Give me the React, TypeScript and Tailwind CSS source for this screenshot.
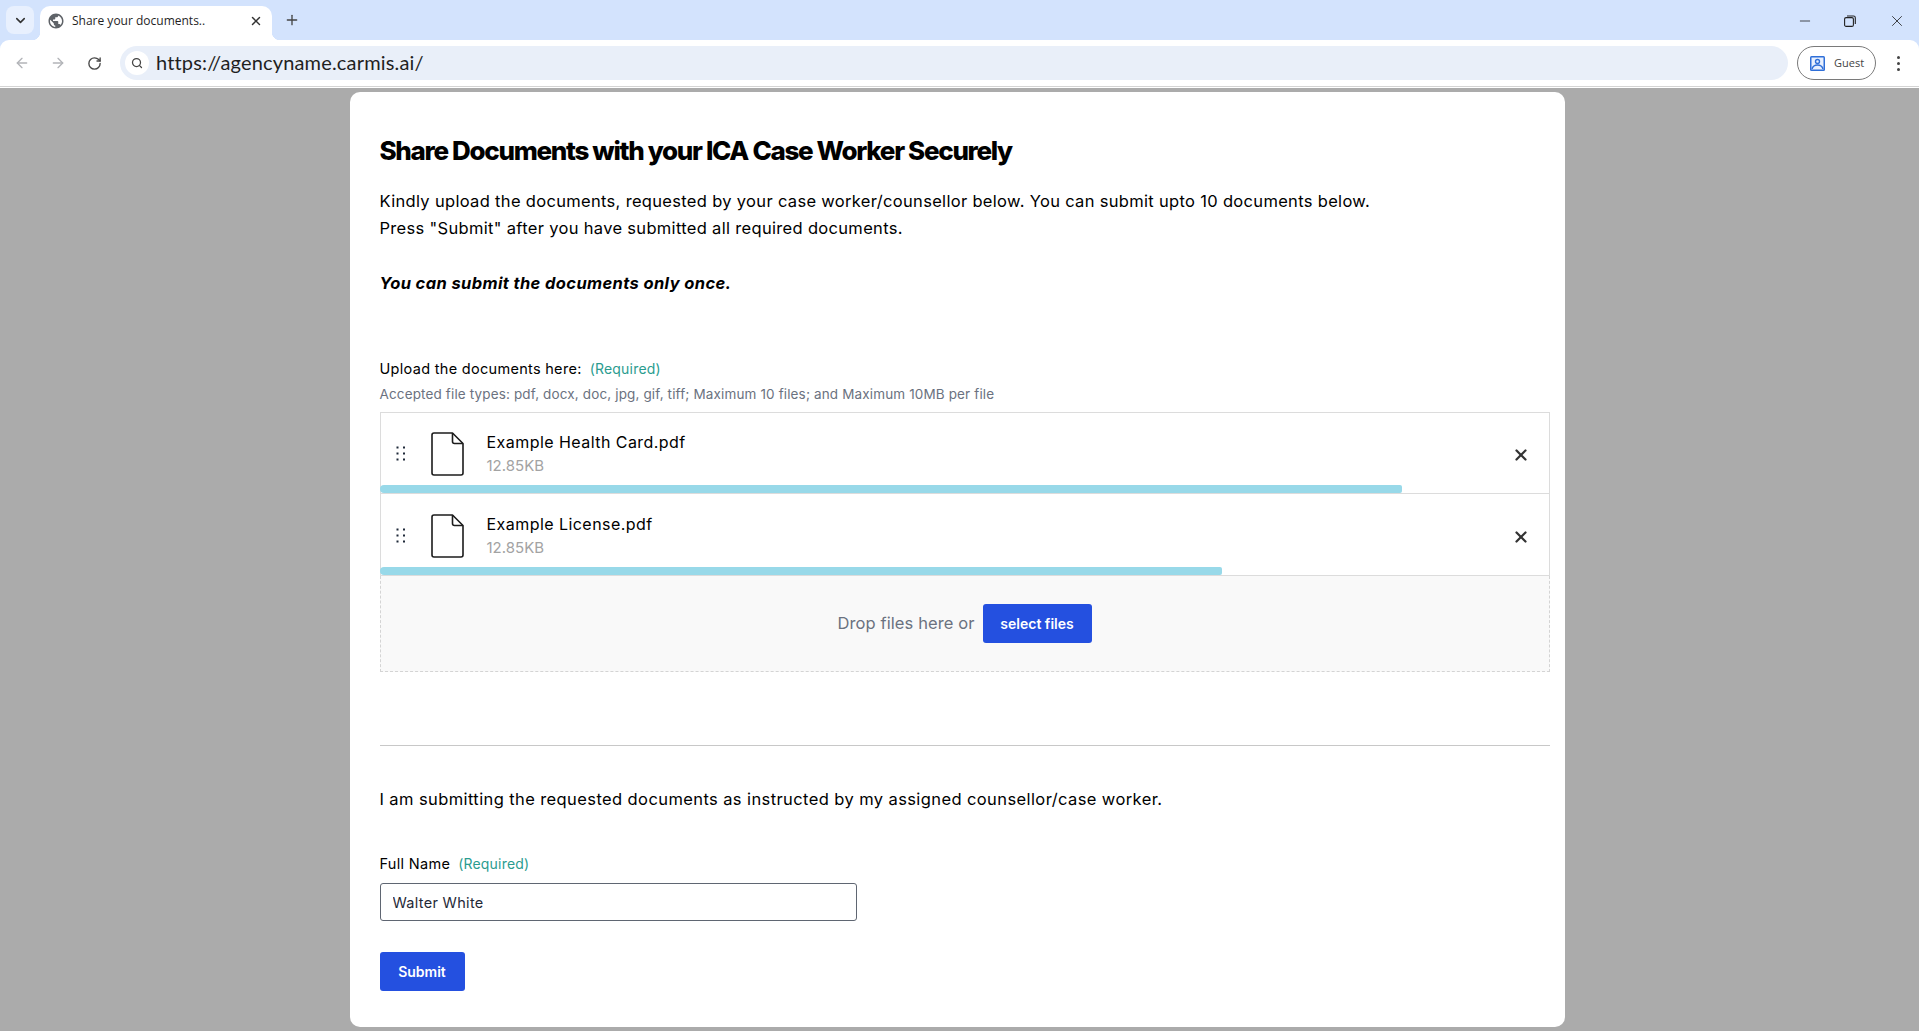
import { ArrowLeft, ArrowRight, ChevronDown, Minus, Plus, RotateCw, Search, X } from "lucide-react";
import { MdPublic } from "react-icons/md";

const FILES = [
  { name: "Example Health Card.pdf", size: "12.85KB", progress: 1022 },
  { name: "Example License.pdf", size: "12.85KB", progress: 842 },
];

function DragDots() {
  return (
    <svg width="10" height="15" viewBox="0 0 10 15" className="text-gray-800">
      {[1, 7, 13].map((y) => (
        <g key={y}>
          <rect x="0.5" y={y - 0.5} width="2" height="2" fill="currentColor" />
          <rect x="7" y={y - 0.5} width="2" height="2" fill="currentColor" />
        </g>
      ))}
    </svg>
  );
}

function FileIcon() {
  return (
    <svg width="33" height="44" viewBox="0 0 33 44" fill="none" stroke="#1c1c1c" strokeWidth="1.6" strokeLinejoin="round">
      <path d="M3 1h18.5L32 11.5V41a2 2 0 0 1-2 2H3a2 2 0 0 1-2-2V3a2 2 0 0 1 2-2z" />
      <path d="M21.5 1v8.5a2 2 0 0 0 2 2H32" />
    </svg>
  );
}

function FileRow({ name, size, progress }: { name: string; size: string; progress: number }) {
  return (
    <div className="flex flex-col border-b border-[#dcdcdc] bg-white">
      <div className="flex h-[72px] items-center pt-[9px]">
        <div className="flex w-[50px] pl-[15px]">
          <DragDots />
        </div>
        <FileIcon />
        <div className="ml-[23px] flex-1 pt-[2px]">
          <div className="text-[16px] leading-[22px] tracking-[0.45px] text-black">{name}</div>
          <div className="text-[15px] leading-[26px] text-[#a3a3a3]">{size}</div>
        </div>
        <X size={18} strokeWidth={3} className="mr-[19px] mt-[3px] text-[#333333]" />
      </div>
      <div className="-ml-px h-[8px] rounded-r-[2px] rounded-l-[4px] bg-[#98d9e9]" style={{ width: progress }} />
    </div>
  );
}

function Required() {
  return <span className="ml-[8px] text-[14px] tracking-[0.2px] text-[#2b9c8f]">(Required)</span>;
}

function BrowserChrome() {
  return (
    <div className="bg-[#d3e3fd] [font-family:'Open_Sans',sans-serif]">
      <div className="flex h-[40px] items-end">
        <div className="mb-[6px] ml-[6px] flex h-[28px] w-[28px] items-center justify-center rounded-lg bg-[#e8f0fe]">
          <ChevronDown size={15} strokeWidth={2.5} className="text-[#333]" />
        </div>
        <div className="relative ml-[6px] flex h-[34px] w-[232px] items-center rounded-t-[10px] bg-white pb-[5px] pl-[7px] pr-[9px]">
          <div className="absolute bottom-0 left-[-8px] h-[8px] w-[8px] bg-[radial-gradient(circle_at_0_0,transparent_8px,white_8.5px)]" />
          <div className="absolute bottom-0 right-[-8px] h-[8px] w-[8px] bg-[radial-gradient(circle_at_100%_0,transparent_8px,white_8.5px)]" />
          <MdPublic size={18} className="text-[#5f6368]" />
          <span className="ml-[7px] flex-1 text-[12px] text-[#1f1f1f]">Share your documents..</span>
          <X size={14} strokeWidth={2.5} className="text-[#333]" />
        </div>
        <div className="mb-[8px] ml-[12px] flex h-[24px] items-center">
          <Plus size={16} strokeWidth={2} className="text-[#444]" />
        </div>
        <div className="ml-auto mb-[10px] flex items-center text-[#222]">
          <Minus size={16} strokeWidth={1.2} className="mr-[31px]" />
          <svg width="12" height="12" viewBox="0 0 12 12" fill="none" stroke="currentColor" strokeWidth="1.1" className="mr-[32px]">
            <rect x="0.6" y="2.6" width="8.8" height="8.8" rx="1.5" />
            <path d="M3 1h6.5A1.8 1.8 0 0 1 11.3 2.8V9" />
          </svg>
          <X size={18} strokeWidth={1.1} className="mr-[13px]" />
        </div>
      </div>
      <div className="flex h-[46px] items-center rounded-t-[9px] bg-white">
        <ArrowLeft size={16} strokeWidth={2} className="ml-[14px] text-[#b2b4b8]" />
        <ArrowRight size={16} strokeWidth={2} className="ml-[20px] text-[#b2b4b8]" />
        <RotateCw size={15} strokeWidth={2.2} className="ml-[21px] text-[#4a4a4a]" />
        <div className="ml-[18px] flex h-[34px] w-[1668px] items-center rounded-full bg-[#e9eff9] pl-[5px]">
          <div className="flex h-[24px] w-[24px] items-center justify-center rounded-full bg-white">
            <Search size={12} strokeWidth={2.5} className="text-[#444]" />
          </div>
          <span className="mb-[2px] ml-[7px] text-[20px] tracking-[0.17px] text-[#1f1f1f] [font-family:Lato,sans-serif]">https://agencyname.carmis.ai/</span>
        </div>
        <div className="ml-[9px] flex h-[34px] w-[79px] items-center rounded-full border border-[#7a7a7a] pl-[12px]">
          <svg width="15" height="15" viewBox="0 0 15 15">
            <rect width="15" height="15" rx="1.5" fill="#2f6fd8" />
            <rect x="1.5" y="1.5" width="12" height="12" fill="#e8f0fe" />
            <circle cx="7.5" cy="5.5" r="2" fill="none" stroke="#2f6fd8" strokeWidth="1.4" />
            <path d="M2 13c.8-3 3-4 5.5-4s4.700 1 5.500 4" fill="none" stroke="#2f6fd8" strokeWidth="1.4" />
          </svg>
          <span className="ml-[9px] text-[11px] text-[#444]">Guest</span>
        </div>
        <div className="ml-[21px] flex flex-col gap-[3px]">
          <span className="h-[3px] w-[3px] rounded-full bg-[#444]" />
          <span className="h-[3px] w-[3px] rounded-full bg-[#444]" />
          <span className="h-[3px] w-[3px] rounded-full bg-[#444]" />
        </div>
      </div>
      <div className="h-[2px] border-t border-[#d4d4d4] bg-white" />
    </div>
  );
}

export default function App() {
  return (
    <div className="flex h-[1031px] flex-col overflow-hidden bg-[#ababab] [font-family:Inter,sans-serif]">
      <BrowserChrome />
      <div className="flex justify-center pt-[4px] pr-[5px]">
        <main className="h-[935px] w-[1215px] rounded-[10px] bg-white pl-[30px] pr-[15px] pt-[39px]">
          <h1 className="text-[26px] leading-[40px] font-extrabold tracking-[-1.32px] text-black">
            Share Documents with your ICA Case Worker Securely
          </h1>
          <p className="mt-[17px] text-[16.5px] leading-[27px] tracking-[0.32px] text-black">
            Kindly upload the documents, requested by your case worker/counsellor below. You can submit upto 10 documents below.
            <br />
            Press "Submit" after you have submitted all required documents.
          </p>
          <p className="mt-[28px] text-[16.5px] leading-[27px] font-bold italic tracking-[0.38px] text-black">
            You can submit the documents only once.
          </p>

          <div className="mt-[60px] flex items-center text-[14.5px] leading-[24px] tracking-[0.3px] text-black">
            Upload the documents here:
            <Required />
          </div>
          <div className="text-[13.5px] leading-[26px] tracking-[0.14px] text-[#6b7280]">
            Accepted file types: pdf, docx, doc, jpg, gif, tiff; Maximum 10 files; and Maximum 10MB per file
          </div>

          <div className="mt-[5px] flex flex-col gap-px border-x border-t border-[#dcdcdc]">
            {FILES.map((file) => (
              <FileRow key={file.name} {...file} />
            ))}
          </div>
          <div className="flex h-[96px] items-center justify-center border-x border-b border-dashed border-[#d4d4d4] bg-[#f9f9f9]">
            <span className="text-[16.5px] tracking-[0.1px] text-[#6b7280]">Drop files here or</span>
            <button className="ml-[8px] h-[39px] w-[109px] rounded-[3px] bg-[#2450e0] text-[14px] font-semibold text-white">
              select files
            </button>
          </div>

          <hr className="mt-[73px] border-[#c8c8c8]" />

          <p className="mt-[40px] text-[16.5px] leading-[27px] tracking-[0.4px] text-black">
            I am submitting the requested documents as instructed by my assigned counsellor/case worker.
          </p>

          <div className="mt-[39px] flex items-center text-[14.5px] leading-[24px] tracking-[0.3px] text-black">
            Full Name
            <Required />
          </div>
          <input
            readOnly
            value="Walter White"
            className="mt-[7px] block h-[38px] w-[477px] rounded-[3px] border border-[#5f6672] bg-white px-[12px] text-[14.5px] tracking-[0.3px] text-[#1f2937] outline-none"
          />
          <button className="mt-[31px] h-[39px] w-[85px] rounded-[3px] bg-[#2450e0] text-[14px] font-semibold text-white">
            Submit
          </button>
        </main>
      </div>
    </div>
  );
}
